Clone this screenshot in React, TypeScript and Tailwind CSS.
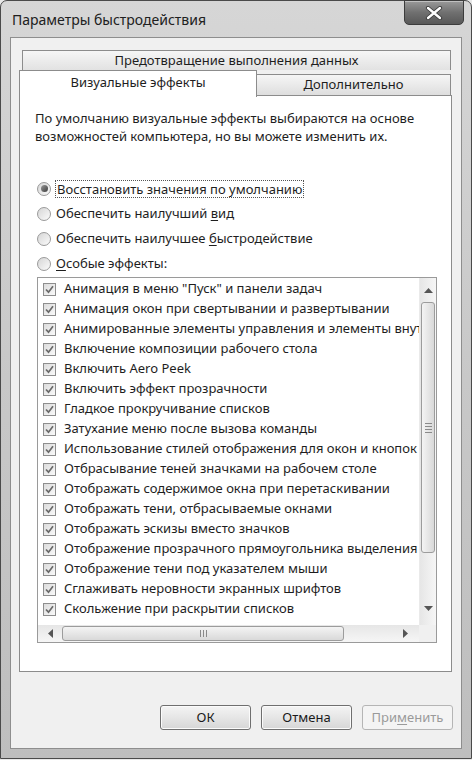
import React from "react";

const items = [
  'Анимация в меню "Пуск" и панели задач',
  "Анимация окон при свертывании и развертывании",
  "Анимированные элементы управления и элементы внутри окна",
  "Включение композиции рабочего стола",
  "Включить Aero Peek",
  "Включить эффект прозрачности",
  "Гладкое прокручивание списков",
  "Затухание меню после вызова команды",
  "Использование стилей отображения для окон и кнопок",
  "Отбрасывание теней значками на рабочем столе",
  "Отображать содержимое окна при перетаскивании",
  "Отображать тени, отбрасываемые окнами",
  "Отображать эскизы вместо значков",
  "Отображение прозрачного прямоугольника выделения",
  "Отображение тени под указателем мыши",
  "Сглаживать неровности экранных шрифтов",
  "Скольжение при раскрытии списков",
];

function Check() {
  return (
    <span className="w-[13px] h-[13px] shrink-0 border border-[#8e8e8e] bg-linear-to-br from-[#dcdcdc] to-[#fafafa] flex items-center justify-center">
      <svg width="11" height="11" viewBox="0 0 11 11">
        <path d="M2 5.5 L4.5 8.2 L9 2.2" stroke="#6a6a6a" strokeWidth="1.7" fill="none" />
      </svg>
    </span>
  );
}

function Radio({ checked }: { checked?: boolean }) {
  return (
    <span className="w-[14px] h-[14px] shrink-0 rounded-full border border-[#9a9a9a] bg-linear-to-br from-[#d6d6d6] to-[#fbfbfb] flex items-center justify-center">
      {checked && <span className="w-[7px] h-[7px] rounded-full bg-linear-to-br from-[#9a9a9a] to-[#3e3e3e]" />}
    </span>
  );
}

function Btn({ children, disabled }: { children: React.ReactNode; disabled?: boolean }) {
  return (
    <div
      className={
        disabled
          ? "w-[91px] h-[25px] rounded-[3px] border border-[#b5b5b5] bg-[#f4f4f4] flex items-center justify-center text-[13px] text-[#9a9a9a]"
          : "w-[91px] h-[25px] rounded-[3px] border border-[#6f6f6f] bg-linear-to-b from-[#f4f4f4] via-[#e6e6e6] to-[#d6d6d6] shadow-[inset_0_0_0_1px_#fbfbfb] flex items-center justify-center text-[13px] text-[#1a1a1a]"
      }
    >
      {children}
    </div>
  );
}

export default function App() {
  return (
    <div className="w-[472px] h-[760px] bg-[#e8e8e8] font-['Noto_Sans',sans-serif]">
      <div className="w-[472px] h-[759px] flex flex-col rounded-t-[7px] border border-[#4a4a4a] bg-linear-to-b from-[#d6d6d6] via-[#c8c8c8] to-[#bebebe] px-[9px] pb-[9px]">
        {/* title bar */}
        <div className="h-[36px] flex justify-between shrink-0">
          <div className="pl-[2px] pt-[8px] text-[14px] text-[#202020]">Параметры быстродействия</div>
          <div className="-mr-[2px] -mt-px w-[60px] h-[25px] rounded-b-[5px] border border-[#3c3c3c] bg-linear-to-b from-[#9a9a9a] via-[#707070] to-[#585858] shadow-[inset_0_1px_0_#c0c0c0] flex items-center justify-center">
            <svg width="18" height="14" viewBox="0 0 18 14">
              <path d="M3 2 L15 12 M15 2 L3 12" stroke="#3a3a3a" strokeWidth="4.2" strokeLinecap="round" />
              <path d="M3 2 L15 12 M15 2 L3 12" stroke="#ffffff" strokeWidth="2.4" strokeLinecap="round" />
            </svg>
          </div>
        </div>
        {/* client area */}
        <div className="flex-1 border border-[#8e8e8e] bg-[#f0f0f0] flex flex-col pl-[8px] pt-[12px]">
          {/* tabs */}
          <div className="ml-[3px] w-[429px] h-[20px] border border-b-0 border-[#8c8c8c] bg-linear-to-b from-[#f6f6f6] to-[#e2e2e2] flex items-center justify-center text-[13px] text-[#1e1e1e]">
            Предотвращение выполнения данных
          </div>
          <div className="flex items-end h-[26px]">
            <div className="relative z-10 w-[238px] h-[27px] -mb-px border border-b-0 border-[#8c8c8c] bg-white flex items-start justify-center pt-[2px] text-[13px] text-[#1e1e1e]">
              Визуальные эффекты
            </div>
            <div className="w-[194px] h-[22px] border border-l-0 border-[#8c8c8c] bg-linear-to-b from-[#f6f6f6] to-[#dedede] flex items-center justify-center text-[13px] text-[#1e1e1e]">
              Дополнительно
            </div>
          </div>
          {/* panel */}
          <div className="w-[433px] h-[577px] -mt-px border border-[#8c8c8c] bg-white pl-[15px] pt-[13px]">
            <div className="text-[13px] leading-[18px] text-[#1e1e1e]">
              По умолчанию визуальные эффекты выбираются на основе
              <br />
              возможностей компьютера, но вы можете изменить их.
            </div>
            <div className="mt-[31px] ml-[2px] flex flex-col text-[13px] text-[#1e1e1e]">
              <div className="h-[25px] flex items-center gap-[4px]">
                <Radio checked />
                <span className="px-[1px] leading-[16px] border border-dotted border-[#555]">Восстановить значения по умолчанию</span>
              </div>
              <div className="h-[25px] flex items-center gap-[5px]">
                <Radio />
                <span>
                  Обеспечить наилучший <u className="underline-offset-2">в</u>ид
                </span>
              </div>
              <div className="h-[25px] flex items-center gap-[5px]">
                <Radio />
                <span>
                  Обеспечить наилучшее <u className="underline-offset-2">б</u>ыстродействие
                </span>
              </div>
              <div className="h-[25px] flex items-center gap-[5px]">
                <Radio />
                <span>
                  <u className="underline-offset-2">О</u>собые эффекты:
                </span>
              </div>
            </div>
            {/* list */}
            <div className="ml-[2px] mt-px w-[400px] h-[366px] border border-[#9a9a9a] flex flex-col">
              <div className="flex h-[347px]">
                <div className="flex-1 overflow-hidden pt-[1px] pl-[5px]">
                  {items.map((t) => (
                    <div key={t} className="h-[20px] flex items-center gap-[8px] whitespace-nowrap text-[13px] text-[#1e1e1e]">
                      <Check />
                      <span>{t}</span>
                    </div>
                  ))}
                </div>
                {/* vertical scrollbar */}
                <div className="w-[17px] flex flex-col bg-linear-to-r from-[#e6e6e6] to-[#f6f6f6] border-l border-[#eaeaea]">
                  <div className="h-[24px] flex items-center justify-center">
                    <svg width="9" height="5" viewBox="0 0 9 5"><path d="M0 5 L4.5 0 L9 5 Z" fill="#555" /></svg>
                  </div>
                  <div className="mx-[1px] h-[251px] rounded-[3px] border border-[#9c9c9c] bg-linear-to-r from-[#f4f4f4] to-[#d9d9d9] flex flex-col items-center justify-center gap-[2px]">
                    <span className="w-[7px] h-px bg-[#8a8a8a]" />
                    <span className="w-[7px] h-px bg-[#8a8a8a]" />
                    <span className="w-[7px] h-px bg-[#8a8a8a]" />
                    <span className="w-[7px] h-px bg-[#8a8a8a]" />
                  </div>
                  <div className="flex-1" />
                  <div className="h-[24px] mb-[5px] flex items-center justify-center">
                    <svg width="9" height="5" viewBox="0 0 9 5"><path d="M0 0 L4.5 5 L9 0 Z" fill="#555" /></svg>
                  </div>
                </div>
              </div>
              <div className="flex h-[17px]">
                {/* horizontal scrollbar */}
                <div className="flex-1 flex items-stretch bg-linear-to-b from-[#e6e6e6] to-[#f6f6f6]">
                  <div className="w-[24px] flex items-center justify-center">
                    <svg width="5" height="9" viewBox="0 0 5 9"><path d="M5 0 L0 4.5 L5 9 Z" fill="#555" /></svg>
                  </div>
                  <div className="my-[1px] w-[282px] rounded-[3px] border border-[#9c9c9c] bg-linear-to-b from-[#f4f4f4] to-[#d9d9d9] flex items-center justify-center gap-[2px]">
                    <span className="w-px h-[7px] bg-[#8a8a8a]" />
                    <span className="w-px h-[7px] bg-[#8a8a8a]" />
                    <span className="w-px h-[7px] bg-[#8a8a8a]" />
                  </div>
                  <div className="flex-1" />
                  <div className="w-[24px] mr-[2px] flex items-center justify-center">
                    <svg width="5" height="9" viewBox="0 0 5 9"><path d="M0 0 L5 4.5 L0 9 Z" fill="#555" /></svg>
                  </div>
                </div>
                <div className="w-[17px] bg-[#f0f0f0]" />
              </div>
            </div>
          </div>
          {/* buttons */}
          <div className="mt-[33px] flex justify-end gap-[10px] pr-[8px]">
            <Btn>ОК</Btn>
            <Btn>Отмена</Btn>
            <Btn disabled>
              При<u className="underline-offset-2">м</u>енить
            </Btn>
          </div>
        </div>
      </div>
    </div>
  );
}
